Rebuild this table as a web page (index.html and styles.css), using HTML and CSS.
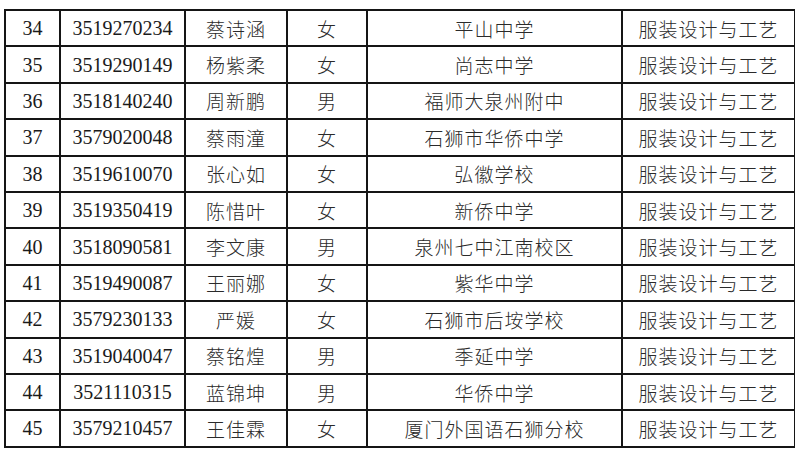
FILE: index.html
```html
<!DOCTYPE html>
<html lang="zh">
<head>
<meta charset="utf-8">
<link rel="stylesheet" href="styles.css">
</head>
<body>
<table class="roster">
<colgroup>
<col class="c-no"><col class="c-id"><col class="c-name"><col class="c-sex"><col class="c-school"><col class="c-major">
</colgroup>
<tbody>
<tr><td class="num">34</td><td class="num">3519270234</td><td>蔡诗涵</td><td>女</td><td>平山中学</td><td>服装设计与工艺</td></tr>
<tr><td class="num">35</td><td class="num">3519290149</td><td>杨紫柔</td><td>女</td><td>尚志中学</td><td>服装设计与工艺</td></tr>
<tr><td class="num">36</td><td class="num">3518140240</td><td>周新鹏</td><td>男</td><td>福师大泉州附中</td><td>服装设计与工艺</td></tr>
<tr><td class="num">37</td><td class="num">3579020048</td><td>蔡雨潼</td><td>女</td><td>石狮市华侨中学</td><td>服装设计与工艺</td></tr>
<tr><td class="num">38</td><td class="num">3519610070</td><td>张心如</td><td>女</td><td>弘徽学校</td><td>服装设计与工艺</td></tr>
<tr><td class="num">39</td><td class="num">3519350419</td><td>陈惜叶</td><td>女</td><td>新侨中学</td><td>服装设计与工艺</td></tr>
<tr><td class="num">40</td><td class="num">3518090581</td><td>李文康</td><td>男</td><td>泉州七中江南校区</td><td>服装设计与工艺</td></tr>
<tr><td class="num">41</td><td class="num">3519490087</td><td>王丽娜</td><td>女</td><td>紫华中学</td><td>服装设计与工艺</td></tr>
<tr><td class="num">42</td><td class="num">3579230133</td><td>严媛</td><td>女</td><td>石狮市后垵学校</td><td>服装设计与工艺</td></tr>
<tr><td class="num">43</td><td class="num">3519040047</td><td>蔡铭煌</td><td>男</td><td>季延中学</td><td>服装设计与工艺</td></tr>
<tr><td class="num">44</td><td class="num">3521110315</td><td>蓝锦坤</td><td>男</td><td>华侨中学</td><td>服装设计与工艺</td></tr>
<tr><td class="num">45</td><td class="num">3579210457</td><td>王佳霖</td><td>女</td><td>厦门外国语石狮分校</td><td>服装设计与工艺</td></tr>
</tbody>
</table>
</body>
</html>
```

FILE: styles.css
```css
html, body {
  margin: 0;
  padding: 0;
  background: #fff;
}
body {
  padding: 9px 0 0 4px;
}
.roster {
  border-collapse: collapse;
  table-layout: fixed;
  width: 790px;
  font-family: "Noto Sans CJK SC", sans-serif;
  font-weight: 300;
  font-size: 19px;
  color: #2a2a2a;
}
.c-no { width: 55px; }
.c-id { width: 125px; }
.c-name { width: 102px; }
.c-sex { width: 80px; }
.c-school { width: 255px; }
.c-major { width: 173px; }
.roster tr {
  height: 36.4px;
}
.roster td {
  border: 2px solid #151515;
  padding: 0;
  text-align: center;
  vertical-align: middle;
  letter-spacing: 1px;
  line-height: 1;
  white-space: nowrap;
}
.roster td.num {
  font-family: "Liberation Serif", serif;
  font-weight: 400;
  font-size: 20px;
  letter-spacing: 0;
  color: #1a1a1a;
}
```
